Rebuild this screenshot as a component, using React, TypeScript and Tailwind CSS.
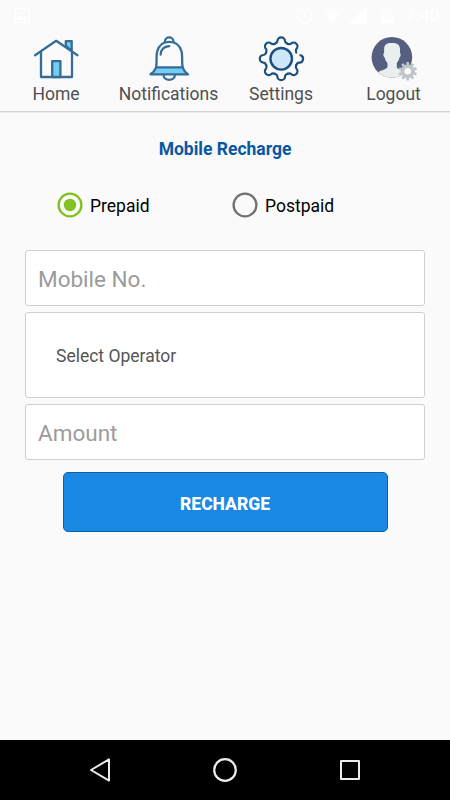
import React, { ReactNode } from "react";

const LOBE = "M-6.24-15.06C-4.6-15.75-3.9-16.4-3.8-17.6A3.8 3.8 0 0 1 3.8-17.6C3.9-16.4 4.6-15.75 6.24-15.06";
const OPEN_LOBE = "M-3.6-19.2A3.8 3.8 0 0 1 3.8-17.6C3.9-16.4 4.6-15.75 6.24-15.06";

function HomeIcon() {
  return (
    <svg width="60" height="52" viewBox="26 30 60 52" fill="none" stroke="#366d96" strokeWidth="2.3" strokeLinecap="round" strokeLinejoin="round">
      <path d="M65.8 46V41.2H71.7V51Z" fill="#74cdf3" />
      <path d="M41 52V77H72V52L56.2 41Z" fill="#fafafa" stroke="none" />
      <path d="M41 52V77H72V52" />
      <path d="M35 55.2L56.2 40.8L77.5 55.2" />
      <path d="M52.2 77V61.2H60.4V77Z" fill="#74cdf3" />
    </svg>
  );
}

function BellIcon() {
  return (
    <svg width="60" height="52" viewBox="138.5 30 60 52" fill="none" stroke="#366d96" strokeWidth="2.3" strokeLinecap="round" strokeLinejoin="round">
      <path d="M164.4 42C164.4 35.9 173 35.9 173 42" />
      <path d="M163 75C163.5 81.4 174 81.4 174.5 75" />
      <path d="M155.6 67.3C156.6 61 155.6 56.5 156.5 52C158 45.5 162.5 41.9 168.8 41.9C175 41.9 179.7 45.5 181.2 52C182.1 56.5 181.1 61 182.1 67.3" />
      <path d="M155.6 67.3H182.1C183.3 70.5 185.2 72.6 187.5 74.3H150C152.4 72.6 154.4 70.5 155.6 67.3Z" fill="#74cdf3" />
      <path d="M160.2 54.5C160.5 49.8 163.5 46.6 168.7 46.2" />
    </svg>
  );
}

function GearIcon() {
  return (
    <svg width="60" height="52" viewBox="251 30 60 52" fill="none" stroke="#1b4f7f" strokeWidth="2.2" strokeLinecap="round">
      <g transform="translate(281.2 58.8)">
        {[0, 45, 135, 180, 225, 270, 315].map((a) => (
          <path key={a} d={LOBE} transform={`rotate(${a})`} />
        ))}
        <path d={OPEN_LOBE} transform="rotate(90)" />
        <circle r="10.8" fill="#cfe6f9" strokeWidth="2.4" />
      </g>
    </svg>
  );
}

function UserIcon() {
  return (
    <svg width="60" height="52" viewBox="363.5 30 60 52">
      <clipPath id="face">
        <circle cx="391.4" cy="57.3" r="20.3" />
      </clipPath>
      <circle cx="391.4" cy="57.3" r="20.3" fill="#556080" />
      <path
        clipPath="url(#face)"
        fill="#e9eeef"
        d="M391.3 43C396.8 43 399.5 44.5 399.5 49.5V53C400.5 53.5 400.4 56.5 399 57.5C398.5 60.2 397.3 61.8 396.3 63V67.5C397.5 70 405 70.5 408 75V79H375V73.8C379 70.3 385.8 69.8 387 67V63C385.8 61.8 384.7 60.2 384.2 57.5C382.7 56.5 382.5 53.5 383.6 53V49.5C383.6 44.5 386 43 391.3 43Z"
      />
      <g transform="translate(407.2 71.3)">
        <g fill="#bcc5c9">
          {[0, 36, 72, 108, 144].map((a) => (
            <rect key={a} x="-1.4" y="-9.2" width="2.8" height="18.4" rx=".6" transform={`rotate(${a})`} />
          ))}
          <circle r="6.9" />
        </g>
        <circle r="3.3" fill="#fafafa" />
      </g>
    </svg>
  );
}

function StatusBar() {
  return (
    <div className="flex h-[30px] items-center justify-between pl-[15px] pr-[10px] text-white">
      <svg width="15" height="15" viewBox="0 0 15 15" fill="none" stroke="currentColor">
        <rect x=".7" y=".7" width="13.6" height="13.6" rx="1" strokeWidth="1.2" />
        <path d="M2.5 12V9L5 7.5L7.5 9.5L9.5 8.5L12.5 12Z" fill="currentColor" stroke="none" />
      </svg>
      <div className="flex items-center">
        <svg width="108" height="20" viewBox="295 5 108 20" fill="none" stroke="currentColor">
          <circle cx="304.5" cy="16" r="7" strokeWidth="1.7" />
          <path d="M304.5 12V16.5L307.5 18.3M296.3 10L300 7M312.7 10L309 7" strokeWidth="1.5" />
          <path d="M322 10Q332.5 3.5 343 10L332.5 23.5Z" fill="currentColor" stroke="none" opacity=".4" />
          <path d="M325.5 13.5Q332.5 10 339.5 13.5L332.5 23.5Z" fill="currentColor" stroke="none" />
          <path d="M367 6V24H349Z" fill="currentColor" stroke="none" />
          <path d="M381 8H384V6H390V8H393V20H381Z" fill="currentColor" stroke="none" opacity=".4" />
          <path d="M381 19H393V23.5H381Z" fill="currentColor" stroke="none" />
        </svg>
        <span className="ml-[3px] w-[34px] text-[17px] font-medium leading-[30px]">7:40</span>
      </div>
    </div>
  );
}

function Tab({ icon, label }: { icon: ReactNode; label: string }) {
  return (
    <button className="flex flex-col items-center">
      {icon}
      <span className="text-[17.5px] leading-[25px] text-[#505050]">{label}</span>
    </button>
  );
}

function Radio({ label, checked }: { label: string; checked?: boolean }) {
  return (
    <label className="flex w-[175px] items-center gap-[7px] text-[17.5px] leading-6 text-black">
      <svg width="26" height="26" viewBox="0 0 26 26" fill="none">
        <circle cx="13" cy="13" r="11.4" strokeWidth="2.3" stroke={checked ? "#7fc01b" : "#707070"} />
        {checked && <circle cx="13" cy="13" r="6.2" fill="#82c122" />}
      </svg>
      <span className="pt-0.5">{label}</span>
    </label>
  );
}

export default function App() {
  return (
    <div className="flex h-[800px] w-[450px] flex-col overflow-hidden bg-[#fafafa] font-['Roboto',sans-serif]">
      <header className="h-[113px] border-b border-[#ececec]">
        <div className="h-[112px] border-b border-[#d2d2d2]">
          <StatusBar />
          <nav className="grid grid-cols-[112px_113px_112px_113px]">
            <Tab icon={<HomeIcon />} label="Home" />
            <Tab icon={<BellIcon />} label="Notifications" />
            <Tab icon={<GearIcon />} label="Settings" />
            <Tab icon={<UserIcon />} label="Logout" />
          </nav>
        </div>
      </header>
      <main className="flex flex-1 flex-col">
        <h1 className="mt-6 text-center text-[17.5px] font-bold leading-6 text-[#0757a5]">Mobile Recharge</h1>
        <div className="mt-[31px] flex pl-[57px]">
          <Radio label="Prepaid" checked />
          <Radio label="Postpaid" />
        </div>
        <div className="mt-[32px] flex flex-col gap-[6px] px-[25px]">
          <div className="flex h-[56px] items-center rounded-[3px] border border-[#cfcfcf] bg-white pl-3 pt-[3px] text-[22.5px] text-[#9b9b9b]">Mobile No.</div>
          <div className="flex h-[86px] items-center rounded-[3px] border border-[#cfcfcf] bg-white pl-[30px] pt-[3px] text-[17.5px] text-[#555]">Select Operator</div>
          <div className="flex h-[56px] items-center rounded-[3px] border border-[#cfcfcf] bg-white pl-3 pt-[3px] text-[22.5px] text-[#9b9b9b]">Amount</div>
        </div>
        <button className="mx-auto mt-[12.4px] h-[60px] w-[325px] rounded-[5px] border border-[#0c5fa9] bg-[#1a89e3] pt-[3px] text-[17.5px] font-extrabold text-white">RECHARGE</button>
      </main>
      <footer className="flex h-[60px] items-center bg-black pl-[87px]">
        <svg width="276" height="30" viewBox="87 755 276 30" fill="none" stroke="#ececec" strokeWidth="2" strokeLinejoin="round">
          <path d="M109 759.4V780.6L91 770Z" />
          <circle cx="225" cy="770" r="10.8" strokeWidth="2.2" />
          <rect x="341" y="761" width="18" height="18" />
        </svg>
      </footer>
    </div>
  );
}
